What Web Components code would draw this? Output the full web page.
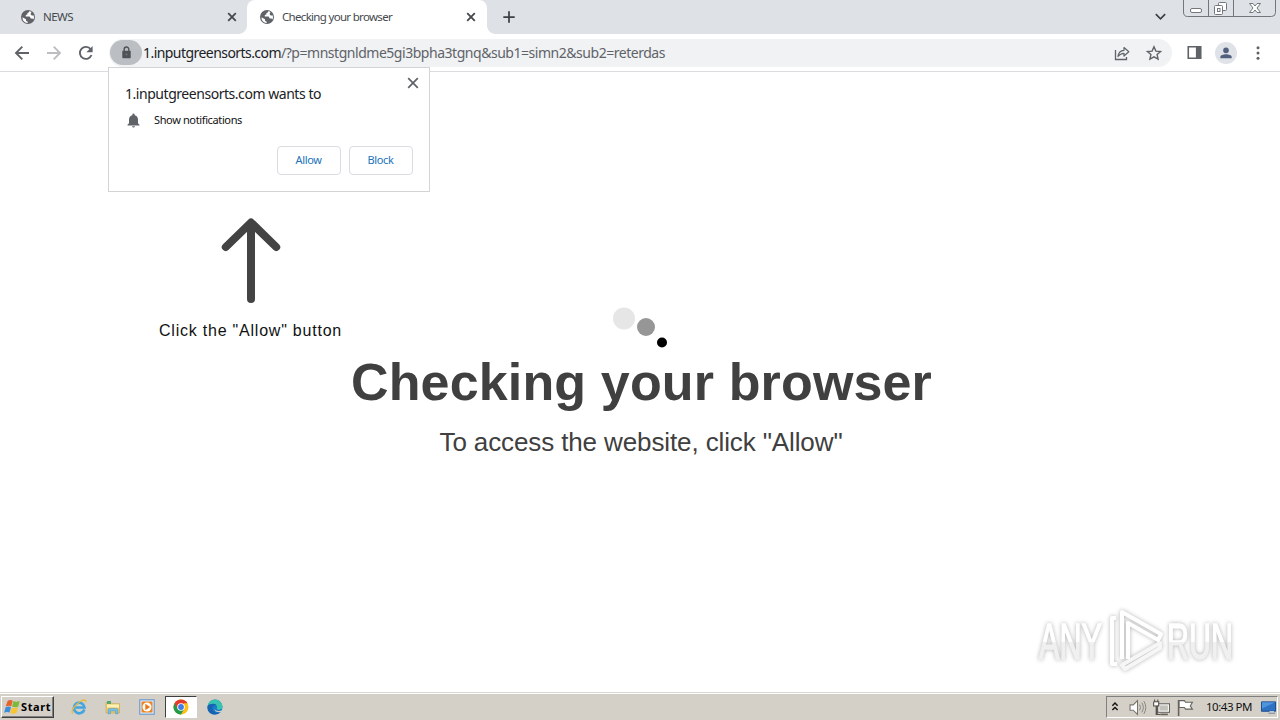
<!DOCTYPE html>
<html lang="en">
<head>
<meta charset="utf-8">
<title>Checking your browser</title>
<style>
  body {
    margin: 0;
    overflow: hidden;
    font-family: "Liberation Sans", Arial, sans-serif;
  }
</style>
</head>
<body>
<desktop-screen></desktop-screen>

<script>
const UI_FONT = '"Noto Sans", "Open Sans", sans-serif';

// Base class: one open shadow root, filled from render()
class BaseElement extends HTMLElement {
  constructor() {
    super();
    this.attachShadow({ mode: "open" });
  }

  connectedCallback() {
    this.shadowRoot.innerHTML = this.render();
  }
}

// A line of text spaced out to an exact width
class FitText extends BaseElement {
  render() {
    return `
    <style>
      :host { display: block; flex: none; }
      span { display: block; width: max-content; white-space: pre; }
    </style>
    <span><slot></slot></span>`;
  }

  connectedCallback() {
    super.connectedCallback();
    const target = Number(this.getAttribute("width"));
    const span = this.shadowRoot.querySelector("span");
    const count = this.textContent.length;
    span.style.letterSpacing = "0px";
    const natural = span.getBoundingClientRect().width;
    span.style.letterSpacing = `${(target - natural) / count}px`;
    this.style.width = `${target}px`;
  }
}
customElements.define("fit-text", FitText);

const ICONS = {
  globe: `<circle cx="8" cy="8" r="7" fill="#5f6368"/>
    <path fill="#fff" d="M2.4 8.2 6 10.2v1.5l1.7 1V14A6 6 0 0 1 2.4 8.2ZM9.5 2.1c-.2 1.3-.8 1.7-2.1 1.8v1.5L5.8 6v1.6h3.8l1.2 2h1.7l1 .8A6 6 0 0 0 13.8 6.6h-2.1L10.5 5l1-1.9Z"/>`,
  close: `<path d="m4.2 4.2 7.6 7.6m0-7.6-7.6 7.6" fill="none" stroke="currentColor" stroke-width="1.8"/>`,
  closeLarge: `<path d="m3.2 3.2 9.6 9.6m0-9.6-9.6 9.6" fill="none" stroke="currentColor" stroke-width="1.7"/>`,
  plus: `<path d="M8 1.500v13M1.500 8h13" stroke="#3c4043" stroke-width="2"/>`,
  chevron: `<path d="m3 5.500 5 5 5-5" fill="none" stroke="#3c4043" stroke-width="1.8"/>`,
  back: `<path d="M15 8H2m6.300-6.300L2 8l6.300 6.300" fill="none" stroke="currentColor" stroke-width="1.900"/>`,
  forward: `<path d="M1 8h13M7.700 1.700 14 8l-6.300 6.300" fill="none" stroke="currentColor" stroke-width="1.900"/>`,
  reload: `<path d="M13.500 10A6 6 0 1 1 12.700 4.300" fill="none" stroke="#5f6368" stroke-width="1.900"/><path d="M14.600 1v6.200H8.400Z" fill="#5f6368"/>`,
  lock: `<rect x="3.500" y="6" width="9" height="8" rx="1" fill="#4f5357"/><path d="M5.500 6.500V4.700a2.500 2.500 0 0 1 5 0v1.800" fill="none" stroke="#4f5357" stroke-width="1.500"/><circle cx="8" cy="10" r="1" fill="#777b80"/>`,
  share: `<path d="M1.500 5v9.500h11V12" fill="none" stroke="#5f6368" stroke-width="1.300"/><path d="M4 11.500C4.500 7.500 6.500 5.500 10 5.300V2.500l4.800 4.300L10 11V8.300C7.500 8.400 5.700 9.300 4 11.500Z" fill="none" stroke="#5f6368" stroke-width="1.200" stroke-linejoin="round"/>`,
  star: `<path d="m8 1.800 1.900 4.300 4.700.4-3.500 3.100 1 4.600L8 11.800l-4.100 2.400 1-4.600-3.500-3.100 4.700-.4Z" fill="none" stroke="#5f6368" stroke-width="1.400"/>`,
  panel: `<path fill="#5f6368" d="M.5 1h15v14H.5Zm1.700 1.700v10.600h7.300V2.700Z" fill-rule="evenodd"/>`,
  person: `<circle cx="8" cy="5" r="3.200" fill="#51607f"/><path fill="#51607f" d="M1.500 14v-1.500C1.500 10.300 5 9.300 8 9.300s6.500 1 6.500 3.200V14Z"/>`,
  dots: `<g fill="#5f6368"><circle cx="8" cy="2.700" r="1.500"/><circle cx="8" cy="8" r="1.500"/><circle cx="8" cy="13.300" r="1.500"/></g>`,
  bell: `<path fill="#5f6368" d="M8 15.500a1.600 1.600 0 0 0 1.600-1.500H6.400A1.600 1.600 0 0 0 8 15.500Zm4.800-4.500V7c0-2.400-1.300-4.200-3.600-4.700V1.700a1.200 1.200 0 0 0-2.400 0v.6C4.500 2.800 3.200 4.600 3.200 7v4l-1.600 1.500v.8h12.800v-.8Z"/>`,
  flagWindows: `<path fill="#e8602c" d="M3.600 1.900Q6 .3 8.700 1.700L7.200 7.200Q4.300 6 1.700 7.500Z"/><path fill="#7fb93c" d="M9.500 2.100q2.700 1.300 6.200-.1L14.200 7.700q-3.200 1.300-6.200-.1Z"/><path fill="#3b8edb" d="M1.500 8.400q2.700-1.600 5.500-.3L5.600 13.500q-2.700-1.300-5.500.3Z"/><path fill="#f8c431" d="M7.800 8.500q2.700 1.400 6.200.1L12.500 14q-3.300 1.500-6.200.1Z"/>`,
  ie: `<path d="M13.300 10.500A5.300 5.300 0 1 1 13.500 8.500H4.500" fill="none" stroke="#42a5df" stroke-width="2.700"/><path d="M2 14.500C-1 13 4 5 10 2c3-1.600 5.500-1.300 4.600 1.400" fill="none" stroke="#e9ba36" stroke-width="1.300"/>`,
  folder: `<path d="M1 3.500h5l1 1.200h7.500V14H1Z" fill="#efcd67" stroke="#c9a248" stroke-width=".6"/><path d="M2 2h4v3H2Z" fill="#55a86d"/><path d="M2 5.500h12v3H2Z" fill="#fbf1b8"/><path d="M3 14.800V11q0-1.600 1.600-1.600h6.800q1.600 0 1.600 1.600v3.800h-2.500V12h-5v2.800Z" fill="#78bee4" stroke="#4f93bc" stroke-width=".5"/>`,
  media: `<rect x=".8" y=".8" width="14.400" height="14.400" fill="#dbeafa" stroke="#5d90c9"/><rect x="2.500" y="2.500" width="11" height="11" rx="1" fill="#ef8420"/><circle cx="8" cy="8" r="4.500" fill="#fff"/><path d="m6.300 4.800 4.800 3.200-4.800 3.200Z" fill="#ef7512"/>`,
  chrome: `<circle cx="8" cy="8" r="7.500" fill="#fbc116"/><path d="M8 8 1.500 4.250A7.500 7.500 0 0 1 14.500 4.250H8Z" fill="#e33b2e"/><path d="M1.500 4.250A7.500 7.500 0 0 0 8 15.500l3.250-5.630L8 8Z" fill="#229a4b"/><path d="M1.500 4.250 4.750 9.900 8 8l3-3.750Z" fill="#e33b2e"/><circle cx="8" cy="8" r="3.800" fill="#fff"/><circle cx="8" cy="8" r="2.900" fill="#3f7de8"/>`,
  edge: `<circle cx="8" cy="8" r="7.500" fill="#167ac6"/><path d="M.6 7A7.500 7.500 0 0 1 15.500 7.500c0 3-2.500 3.800-5 3-1.500-.6-.3-1.400-.3-2.700C10 5.500 4.500 3.500.6 7Z" fill="#38c3b0"/><path d="M.6 7C2.500 4.500 7 4 9.500 6 5 5.600 4 10 7 12.500c2 1.700 4.500 1.500 6.800.6C8 18.500-1 14.500.6 7Z" fill="#1763b1"/><path d="M8 7.600c-1.500 2 .2 5.300 5 4.300l1.800-.7-.9 1.900C10 14 6 12 8 7.600Z" fill="#d4d0c8"/>`,
  up: `<path d="m5 6.500 3-3 3 3m-6 5 3-3 3 3" fill="none" stroke="#111" stroke-width="1.600"/>`,
  speaker: `<path d="M1 5.500h3L8 1.500v13l-4-4H1Z" fill="#fff" stroke="#77746e"/><path d="M10 5.300q1.700 2.700 0 5.400m2-7.200q3 4.500 0 9m2-10.500q3.600 6 0 12" fill="none" stroke="#85827c" stroke-width=".9"/>`,
  network: `<rect x="4.500" y="4.500" width="11" height="8" fill="#fff" stroke="#66635e"/><path d="M6 6h8v5H6Z" fill="#c4c1ba"/><path d="M7 14.500h7" stroke="#66635e" stroke-width="1.500"/><path d="M1 3h4v3H1Z" fill="#fff"/><path d="M.6 2.500h4.800v4H4v8h3M.6 2.500v4H3v8h3M1.500.5v2m3-2v2" fill="none" stroke="#55524d"/>`,
  flag: `<path d="M1.500 1v15" stroke="#66635e" stroke-width="1.500"/><path d="M2 1.500h5l1 1.500h6.500l-2 3.500 2 3H8L7 8H2Z" fill="#fff" stroke="#66635e"/>`,
  monitor: `<path d="M.5 2h15v10H.5Z" fill="#2e72c4" stroke="#1b4785"/><path d="M1 2.500h14L1 9Z" fill="#4e95db"/><path d="M9 12h5v2H9Z" fill="#e7e7e7"/><path d="M8 14h7" stroke="#60758f"/>`
};

class UiIcon extends BaseElement {
  render() {
    const size = this.getAttribute("size") || 16;
    return `
    <style>
      :host { display: block; flex: none; width: ${size}px; height: ${size}px; }
      svg { display: block; }
    </style>
    <svg viewBox="0 0 16 16" width="${size}" height="${size}" overflow="visible">${ICONS[this.getAttribute("name")]}</svg>`;
  }
}
customElements.define("ui-icon", UiIcon);

class BrowserTab extends BaseElement {
  render() {
    return `
    <style>
      :host {
        display: flex;
        align-items: center;
        box-sizing: border-box;
        height: 34px;
        width: 247px;
        padding: 0 7px 0 20px;
        font: 11.500px/16px ${UI_FONT};
        color: #45494d;
      }
      :host([active]) {
        position: relative;
        width: 240px;
        padding: 0 8px 0 12px;
        background: #fff;
        border-radius: 8px 8px 0 0;
      }
      /* Curved feet joining the tab to the toolbar */
      :host([active])::before, :host([active])::after {
        content: "";
        position: absolute;
        bottom: 0;
        width: 8px;
        height: 8px;
      }
      :host([active])::before { left: -8px; background: radial-gradient(circle at 0 0, transparent 7.500px, #fff 8px); }
      :host([active])::after { right: -8px; background: radial-gradient(circle at 100% 0, transparent 7.500px, #fff 8px); }
      .label { flex: 1; display: flex; padding-left: 7px; }
      .close { color: #45494d; }
    </style>
    <ui-icon name="globe"></ui-icon>
    <span class="label"><slot></slot></span>
    <ui-icon class="close" name="close"></ui-icon>`;
  }
}
customElements.define("browser-tab", BrowserTab);

class WindowControls extends BaseElement {
  render() {
    return `
    <style>
      :host { display: block; width: 94px; height: 18px; margin-right: 3px; }
      svg { display: block; }
    </style>
    <svg width="94" height="18" fill="none" stroke="#73777d">
      <path d="M.5 0v12q0 4.500 4 4.500h84q4 0 4-4V0M25.500 0v16.500M50.500 0v16.500"/>
      <rect x="7.500" y="8.500" width="11" height="4" rx="1.500" fill="#fff"/>
      <rect x="35.500" y="2.500" width="8" height="8" rx="1" fill="#fff"/>
      <rect x="31.500" y="5.500" width="8" height="9" rx="1" fill="#fff"/>
      <rect x="34.500" y="8.500" width="2.500" height="3"/>
      <path d="M66.500 3.500h3.500l2 2.500 2-2.500h3.500L74 8l3.500 4.500H74l-2-2.500-2 2.500h-3.500L70 8Z" fill="#fff"/>
    </svg>`;
  }
}
customElements.define("window-controls", WindowControls);

class TabStrip extends BaseElement {
  render() {
    return `
    <style>
      :host { display: flex; height: 34px; background: #dee1e6; }
      .new { padding: 10px 0 0 15px; }
      .menu { margin-left: auto; padding: 9px 15px 0 0; }
    </style>
    <slot></slot>
    <ui-icon class="new" name="plus" size="14"></ui-icon>
    <ui-icon class="menu" name="chevron" size="15"></ui-icon>
    <window-controls></window-controls>`;
  }
}
customElements.define("tab-strip", TabStrip);

class BrowserToolbar extends BaseElement {
  render() {
    return `
    <style>
      :host {
        display: flex;
        align-items: center;
        box-sizing: border-box;
        height: 38px;
        padding: 0 14px 0 14px;
        background: #fff;
        border-bottom: 1px solid #dadce0;
      }
      .nav { display: flex; gap: 16px; color: #5f6368; width: 95px; }
      .fwd { color: #bcbec1; }
      .omnibox {
        flex: none;
        display: flex;
        align-items: center;
        box-sizing: border-box;
        width: 1063px;
        height: 28px;
        padding: 0 10px 0 1px;
        border-radius: 14px;
        background: #f0f2f4;
      }
      .lock {
        display: grid;
        place-items: center;
        width: 32px;
        height: 25px;
        border-radius: 13px;
        background: #bbbec2;
      }
      .url { display: flex; flex: 1; padding-left: 1px; font: 14px/22px ${UI_FONT}; color: #5f6368; }
      .host { color: #202124; }
      .actions { display: flex; gap: 16px; }
      .side { display: flex; align-items: center; margin-left: auto; gap: 13px; }
      .avatar { display: grid; place-items: center; width: 22px; height: 22px; border-radius: 50%; background: #dfe2e7; }
    </style>
    <div class="nav">
      <ui-icon name="back"></ui-icon>
      <ui-icon class="fwd" name="forward"></ui-icon>
      <ui-icon name="reload"></ui-icon>
    </div>
    <div class="omnibox">
      <span class="lock"><ui-icon name="lock" size="15"></ui-icon></span>
      <span class="url"><fit-text class="host" width="138">1.inputgreensorts.com</fit-text><fit-text width="384">/?p=mnstgnldme5gi3bpha3tgnq&amp;sub1=simn2&amp;sub2=reterdas</fit-text></span>
      <span class="actions"><ui-icon name="share"></ui-icon><ui-icon name="star"></ui-icon></span>
    </div>
    <div class="side">
      <ui-icon name="panel" size="15"></ui-icon>
      <span class="avatar"><ui-icon name="person" size="14"></ui-icon></span>
      <ui-icon name="dots"></ui-icon>
    </div>`;
  }
}
customElements.define("browser-toolbar", BrowserToolbar);

class PromptButton extends BaseElement {
  render() {
    return `
    <style>
      :host { display: block; }
      button {
        display: flex;
        align-items: center;
        justify-content: center;
        width: 64px;
        height: 29px;
        padding: 0 1px 2px 0;
        border: 1px solid #dadce0;
        border-radius: 4px;
        background: #fff;
        color: #2373b9;
        font: 11px/14px ${UI_FONT};
      }
    </style>
    <button><slot></slot></button>`;
  }
}
customElements.define("prompt-button", PromptButton);

class PermissionPrompt extends BaseElement {
  render() {
    return `
    <style>
      :host {
        display: block;
        box-sizing: border-box;
        width: 322px;
        height: 125px;
        padding: 7px 16px 0;
        border: 1px solid #d3d4d6;
        background: #fff;
        color: #202124;
        font-family: ${UI_FONT};
      }
      .head { display: flex; justify-content: space-between; height: 35px; margin-right: -9px; }
      .title { padding-top: 9px; font-size: 14px; line-height: 20px; }
      .close { color: #5f6368; margin-right: 1px; }
      .row { display: flex; align-items: center; height: 20px; padding-left: 1px; gap: 13px; font-size: 11px; line-height: 16px; }
      .row fit-text { color: #111; }
      .buttons { display: flex; justify-content: flex-end; gap: 8px; margin-top: 16px; }
    </style>
    <div class="head">
      <div class="title"><fit-text width="196">1.inputgreensorts.com wants to</fit-text></div>
      <ui-icon class="close" name="closeLarge"></ui-icon>
    </div>
    <div class="row"><ui-icon name="bell" size="15"></ui-icon><fit-text width="88">Show notifications</fit-text></div>
    <div class="buttons">
      <prompt-button><fit-text width="26">Allow</fit-text></prompt-button>
      <prompt-button><fit-text width="26">Block</fit-text></prompt-button>
    </div>`;
  }
}
customElements.define("permission-prompt", PermissionPrompt);

class AllowHint extends BaseElement {
  render() {
    return `
    <style>
      :host { display: flex; flex-direction: column; align-items: center; width: 185px; font-size: 16px; line-height: 20px; color: #111; }
      svg { display: block; margin-bottom: 17px; }
    </style>
    <svg width="60" height="86" fill="none" stroke="#434343" stroke-width="8" stroke-linecap="round" stroke-linejoin="round">
      <path d="M30 81V5M4.800 29 30 4.500 55.200 29"/>
    </svg>
    <fit-text width="183">Click the "Allow" button</fit-text>`;
  }
}
customElements.define("allow-hint", AllowHint);

class BrowserCheck extends BaseElement {
  render() {
    return `
    <style>
      :host { display: flex; flex-direction: column; align-items: center; color: #404040; }
      svg { display: block; }
      h1 { margin: 4px 0 0 3px; font-size: 52px; line-height: 60px; font-weight: bold; }
      p { margin: 15px 0 0 2px; font-size: 26px; line-height: 30px; }
    </style>
    <svg width="56" height="42">
      <circle cx="12" cy="12.500" r="11" fill="#e6e6e6"/>
      <circle cx="34" cy="21" r="9" fill="#969696"/>
      <circle cx="50" cy="36.500" r="5" fill="#000"/>
    </svg>
    <h1><fit-text width="581">Checking your browser</fit-text></h1>
    <p><fit-text width="403">To access the website, click "Allow"</fit-text></p>`;
  }
}
customElements.define("browser-check", BrowserCheck);

class RunWatermark extends BaseElement {
  render() {
    return `
    <style>
      :host { display: block; pointer-events: none; }
      svg { display: block; filter: drop-shadow(0 0 2px rgba(0, 0, 0, .3)); }
      text { font: 50px "Liberation Sans", sans-serif; }
    </style>
    <svg width="240" height="80">
      <defs>
        <linearGradient id="fade" x1="0" y1="0" x2="0" y2="76" gradientUnits="userSpaceOnUse">
          <stop offset=".48" stop-color="#fff"/><stop offset=".49" stop-color="#f0f0f0"/>
        </linearGradient>
      </defs>
      <g fill="url(#fade)" stroke="url(#fade)" stroke-width="1.500">
        <text x="9" y="54" textLength="63" lengthAdjust="spacingAndGlyphs">ANY</text>
        <text x="137" y="54" textLength="66" lengthAdjust="spacingAndGlyphs">RUN</text>
      </g>
      <g fill="none" stroke="#fff" stroke-width="4" stroke-linejoin="round">
        <path d="M86 13h-4v46h5"/>
        <path d="M92 54V7l39 22-3 6-30-17v36"/>
        <path d="m92 60 38-22v5L95 64Z" stroke="#f6f6f6"/>
      </g>
    </svg>`;
  }
}
customElements.define("run-watermark", RunWatermark);

class TaskBar extends BaseElement {
  render() {
    return `
    <style>
      :host {
        display: flex;
        align-items: center;
        box-sizing: border-box;
        height: 28px;
        padding: 1px 2px 0 1px;
        background: #d4d0c8;
        border-top: 1px solid #dcd9d2;
        box-shadow: inset 0 1px #fff;
      }
      .start {
        display: flex;
        align-items: center;
        gap: 1px;
        box-sizing: border-box;
        width: 53px;
        height: 22px;
        padding-left: 2px;
        border: 1px solid;
        border-color: #fff #404040 #404040 #fff;
        box-shadow: inset -1px -1px #808080;
        font: bold 11px/14px ${UI_FONT};
        color: #000;
      }
      .apps { display: flex; align-items: center; margin-left: 8px; }
      .app { display: grid; place-items: center; box-sizing: border-box; width: 34px; height: 22px; }
      .app[pressed] {
        width: 32px;
        margin: 0 1px;
        background: #fff;
        border: 1px solid;
        border-color: #404040 #fff #fff #404040;
      }
      .tray {
        display: flex;
        align-items: center;
        box-sizing: border-box;
        width: 172px;
        height: 22px;
        margin-left: auto;
        padding-left: 1px;
        gap: 7px;
        border: 1px solid;
        border-color: #808080 #fff #fff #808080;
        font: 11.500px/16px ${UI_FONT};
        color: #111;
      }
      .tray fit-text { margin: 0 2px 0 5px; }
    </style>
    <div class="start"><ui-icon name="flagWindows" size="16"></ui-icon><fit-text width="30">Start</fit-text></div>
    <div class="apps">
      <span class="app"><ui-icon name="ie"></ui-icon></span>
      <span class="app"><ui-icon name="folder"></ui-icon></span>
      <span class="app"><ui-icon name="media"></ui-icon></span>
      <span class="app" pressed><ui-icon name="chrome"></ui-icon></span>
      <span class="app"><ui-icon name="edge"></ui-icon></span>
    </div>
    <div class="tray">
      <ui-icon name="up" size="14"></ui-icon>
      <ui-icon name="speaker" size="17"></ui-icon>
      <ui-icon name="network" size="17"></ui-icon>
      <ui-icon name="flag" size="17"></ui-icon>
      <fit-text width="46">10:43 PM</fit-text>
      <ui-icon name="monitor" size="15"></ui-icon>
    </div>`;
  }
}
customElements.define("task-bar", TaskBar);

class DesktopScreen extends BaseElement {
  render() {
    return `
    <style>
      :host { display: flex; flex-direction: column; position: relative; width: 1280px; height: 720px; background: #fff; overflow: hidden; }
      main { flex: 1; display: grid; align-items: start; }
      main > * { grid-area: 1 / 1; }
      allow-hint { margin: 146px 0 0 158px; }
      browser-check { margin-top: 234px; }
      permission-prompt { position: absolute; left: 108px; top: 67px; }
      run-watermark { position: absolute; left: 1030px; top: 605px; }
    </style>
    <tab-strip>
      <browser-tab><fit-text width="30">NEWS</fit-text></browser-tab>
      <browser-tab active><fit-text width="110">Checking your browser</fit-text></browser-tab>
    </tab-strip>
    <browser-toolbar></browser-toolbar>
    <main>
      <allow-hint></allow-hint>
      <browser-check></browser-check>
    </main>
    <task-bar></task-bar>
    <permission-prompt></permission-prompt>
    <run-watermark></run-watermark>`;
  }
}
customElements.define("desktop-screen", DesktopScreen);
</script>
</body>
</html>
